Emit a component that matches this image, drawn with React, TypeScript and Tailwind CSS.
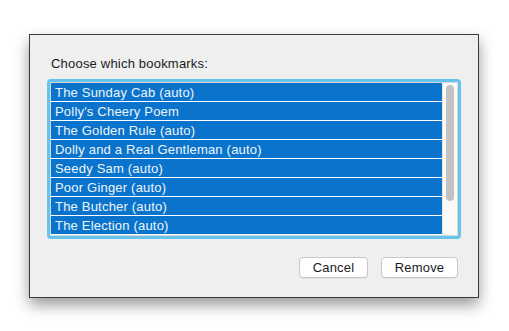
const bookmarks = [
  "The Sunday Cab (auto)",
  "Polly's Cheery Poem",
  "The Golden Rule (auto)",
  "Dolly and a Real Gentleman (auto)",
  "Seedy Sam (auto)",
  "Poor Ginger (auto)",
  "The Butcher (auto)",
  "The Election (auto)",
];

export default function App() {
  return (
    <div
      className="min-h-[331px] w-[509px] bg-white pl-[29px] pt-[34px] tracking-[0.2px]"
      style={{ fontFamily: '"Liberation Sans", Arial, sans-serif' }}
    >
      <div className="box-border flex h-[264px] w-[450px] flex-col border border-[#3a3a3a] bg-[#efefef] px-[17px] pt-[21px] shadow-[0_7px_14px_rgba(0,0,0,0.4)]">
        <div className="pl-[4px] text-[13px] leading-[16px] text-[#1b1b1b]">Choose which bookmarks:</div>

        <div className="mt-[7px] box-border h-[160px] w-[414px] rounded-[4px] border-[3px] border-[#67c3ec]">
          <div className="flex h-full border border-[#d8d8d8] bg-white">
            <ul className="flex-1 overflow-hidden">
              {bookmarks.map((title) => (
                <li
                  key={title}
                  className="h-[19px] border-b border-white bg-[#0a74cc] pl-[4px] text-[13px] leading-[20px] text-[#eef4fb]"
                >
                  {title}
                </li>
              ))}
            </ul>
            <div className="w-[15px] border-l border-[#e6e6e6] bg-[#fafafa] pl-[3px] pt-[2px]">
              <div className="h-[116px] w-[8px] rounded-full bg-[#c2c2c2]" />
            </div>
          </div>
        </div>

        <div className="mt-[18px] flex justify-end gap-[13px] pr-[3px]">
          <button
            type="button"
            className="h-[21px] w-[69px] rounded-[4px] border border-[#c8c8c8] bg-white text-[13px] leading-[19px] text-[#1b1b1b] shadow-[0_1px_0_rgba(0,0,0,0.05)]"
          >
            Cancel
          </button>
          <button
            type="button"
            className="h-[21px] w-[77px] rounded-[4px] border border-[#c8c8c8] bg-white text-[13px] leading-[19px] text-[#1b1b1b] shadow-[0_1px_0_rgba(0,0,0,0.05)]"
          >
            Remove
          </button>
        </div>
      </div>
    </div>
  );
}
